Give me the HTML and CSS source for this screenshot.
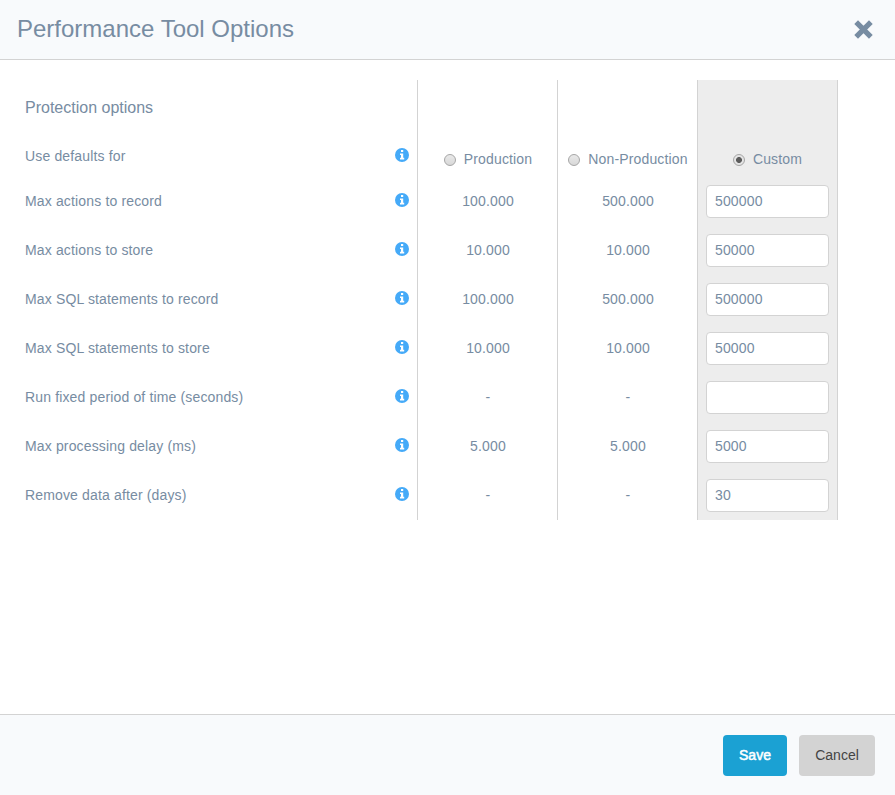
FILE: index.html
```html
<!DOCTYPE html>
<html lang="en">
<head>
<meta charset="utf-8">
<title>Performance Tool Options</title>
<link rel="stylesheet" href="styles.css">
</head>
<body>
<svg width="0" height="0" class="defs" aria-hidden="true">
  <symbol id="info" viewBox="0 0 14 14">
    <circle cx="7" cy="7" r="7" fill="#45aaf8"/>
    <path d="M6 2h2.2v2H6zM5 5.4h3.2v4.4h1v1.7H5V9.8h1V7H5z" fill="#fff"/>
  </symbol>
</svg>
<div class="dialog">
  <header class="header">
    <h1>Performance Tool Options</h1>
    <svg class="close" viewBox="0 0 20 20"><path d="M3 3l14 14M17 3L3 17" stroke="#778ca2" stroke-width="5" stroke-linejoin="round"/></svg>
  </header>
  <main class="content">
    <div class="column labels">
      <div class="head"><h2>Protection options</h2><div class="defaults"><span>Use defaults for</span><svg class="info"><use href="#info"/></svg></div></div>
      <div class="row"><span>Max actions to record</span><svg class="info"><use href="#info"/></svg></div>
      <div class="row"><span>Max actions to store</span><svg class="info"><use href="#info"/></svg></div>
      <div class="row"><span>Max SQL statements to record</span><svg class="info"><use href="#info"/></svg></div>
      <div class="row"><span>Max SQL statements to store</span><svg class="info"><use href="#info"/></svg></div>
      <div class="row"><span>Run fixed period of time (seconds)</span><svg class="info"><use href="#info"/></svg></div>
      <div class="row"><span>Max processing delay (ms)</span><svg class="info"><use href="#info"/></svg></div>
      <div class="row"><span>Remove data after (days)</span><svg class="info"><use href="#info"/></svg></div>
    </div>
    <div class="column values">
      <div class="head"><label><input type="radio" name="preset"><span>Production</span></label></div>
      <div class="row">100.000</div><div class="row">10.000</div><div class="row">100.000</div><div class="row">10.000</div><div class="row">-</div><div class="row">5.000</div><div class="row">-</div>
    </div>
    <div class="column values">
      <div class="head"><label><input type="radio" name="preset"><span>Non-Production</span></label></div>
      <div class="row">500.000</div><div class="row">10.000</div><div class="row">500.000</div><div class="row">10.000</div><div class="row">-</div><div class="row">5.000</div><div class="row">-</div>
    </div>
    <div class="column values custom">
      <div class="head"><label><input type="radio" name="preset" checked><span>Custom</span></label></div>
      <div class="row"><input class="field" type="text" value="500000"></div>
      <div class="row"><input class="field" type="text" value="50000"></div>
      <div class="row"><input class="field" type="text" value="500000"></div>
      <div class="row"><input class="field" type="text" value="50000"></div>
      <div class="row"><input class="field" type="text" value=""></div>
      <div class="row"><input class="field" type="text" value="5000"></div>
      <div class="row"><input class="field" type="text" value="30"></div>
    </div>
  </main>
  <footer class="footer">
    <button class="save">Save</button>
    <button class="cancel">Cancel</button>
  </footer>
</div>
</body>
</html>
```
FILE: styles.css
```css
* { box-sizing: border-box; }
body {
  margin: 0;
  font: 14px/20px "Liberation Sans", Arial, sans-serif;
  letter-spacing: 0.15px;
  color: #778ca2;
  background: #fff;
  overflow: hidden;
}
.defs { display: none; }
.dialog { display: flex; flex-direction: column; height: 795px; }
.header {
  display: flex;
  justify-content: space-between;
  align-items: center;
  height: 60px;
  padding: 0 21px 0 17px;
  background: #f8fafc;
  border-bottom: 1px solid #d3d3d3;
}
h1 { margin: 0 0 2px; font-size: 24px; font-weight: 400; line-height: 32px; letter-spacing: 0; }
.close { width: 21px; height: 21px; }
.content { flex: 1; display: flex; align-items: flex-start; padding: 20px 0 0 17px; }
.column { height: 440px; }
.labels { width: 400px; padding: 0 8px; }
.head { height: 97px; }
h2 { margin: 0; padding-top: 18px; font-size: 16px; font-weight: 400; line-height: 20px; letter-spacing: 0; }
.defaults { display: flex; justify-content: space-between; padding-top: 28px; }
.info { width: 14px; height: 14px; margin-top: 2px; }
.row { display: flex; justify-content: space-between; height: 49px; padding-top: 14px; }
.values { width: 140px; border-left: 1px solid #d3d3d3; }
.values .head { display: flex; align-items: flex-end; justify-content: center; padding: 0 0 8px 1px; }
.values .row { justify-content: center; padding-left: 1px; }
label { display: flex; align-items: center; gap: 8px; white-space: nowrap; }
input[type="radio"] {
  appearance: none;
  width: 12px;
  height: 12px;
  margin: 2px 0 0;
  border: 1px solid #a6a6a6;
  border-radius: 50%;
  background: linear-gradient(#e9e9e9, #d8d8d8);
}
input[type="radio"]:checked { background: radial-gradient(circle, #5c5c5c 0 2.6px, #e4e4e4 3.3px); }
.custom { width: 141px; background: #ededed; border-right: 1px solid #d3d3d3; }
.custom .head { padding-left: 0; }
.custom .row { padding: 8px; }
.field {
  width: 123px;
  height: 33px;
  padding: 0 8px 2px;
  border: 1px solid #d3d3d3;
  border-radius: 4px;
  background: #fff;
  color: #778ca2;
  font: inherit;
  letter-spacing: inherit;
}
.footer {
  display: flex;
  justify-content: flex-end;
  gap: 12px;
  height: 81px;
  padding: 20px;
  background: #f8fafc;
  border-top: 1px solid #d3d3d3;
}
button { height: 41px; padding: 0 0 2px; border: 0; border-radius: 4px; font: inherit; }
.save { width: 64px; background: #1ba1d3; color: #fff; -webkit-text-stroke: 0.5px #fff; }
.cancel { width: 76px; background: #d3d3d3; color: #444; }
```
